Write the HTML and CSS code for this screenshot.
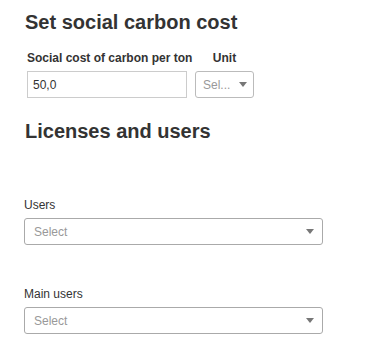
FILE: index.html
```html
<!DOCTYPE html>
<html lang="en">

<head>
    <meta charset="UTF-8">
    <title>Settings</title>
    <link rel="stylesheet" href="styles.css">
</head>

<body>
    <div id="page">
        <h2 class="section-title">Set social carbon cost</h2>
        <div class="cost-row">
            <div class="field cost-field">
                <label class="field-label bold">Social cost of carbon per ton</label>
                <div class="input-box">50,0</div>
            </div>
            <div class="field unit-field">
                <label class="field-label bold">Unit</label>
                <div class="select-box small">
                    <span class="placeholder">Sel...</span>
                    <span class="caret"></span>
                </div>
            </div>
        </div>

        <h2 class="section-title licenses">Licenses and users</h2>

        <div class="field wide">
            <label class="field-label">Users</label>
            <div class="select-box">
                <span class="placeholder">Select</span>
                <span class="caret"></span>
            </div>
        </div>

        <div class="field wide">
            <label class="field-label">Main users</label>
            <div class="select-box">
                <span class="placeholder">Select</span>
                <span class="caret"></span>
            </div>
        </div>
    </div>
</body>

</html>
```

FILE: styles.css
```css
* {
    margin: 0;
    padding: 0;
    box-sizing: border-box;
}

body {
    font-family: 'Liberation Sans', Arial, sans-serif;
    color: #333;
    background-color: #fff;
}

#page {
    padding: 10px 24px 0 24px;
    display: flex;
    flex-direction: column;
}

.section-title {
    font-size: 20px;
    font-weight: bold;
    line-height: 24px;
    margin-left: 1px;
}

.licenses {
    margin-top: 21px;
}

.cost-row {
    display: flex;
    flex-direction: row;
    margin-top: 17px;
    margin-left: 3px;
}

.field {
    display: flex;
    flex-direction: column;
}

.cost-field {
    width: 160px;
    white-space: nowrap;
}

.unit-field {
    margin-left: 8px;
    align-items: center;
}

.field-label {
    font-size: 12px;
    line-height: 14px;
    margin-bottom: 6px;
}

.bold {
    font-weight: bold;
}

.input-box {
    width: 160px;
    height: 27px;
    border: 1px solid #ccc;
    font-size: 12px;
    padding: 0 5px;
    display: flex;
    align-items: center;
}

.select-box {
    width: 299px;
    height: 27px;
    border: 1px solid #aaa;
    border-radius: 3px;
    display: flex;
    flex-direction: row;
    align-items: center;
    justify-content: space-between;
    padding: 0 8px 0 9px;
    font-size: 12px;
}

.select-box.small {
    width: 59px;
    border-color: #bbb;
    padding: 0 6px 0 7px;
}

.placeholder {
    color: #999;
}

.caret {
    width: 0;
    height: 0;
    border-left: 4px solid transparent;
    border-right: 4px solid transparent;
    border-top: 5px solid #777;
}

.wide {
    margin-top: 55px;
}

.wide + .wide {
    margin-top: 42px;
}
```
